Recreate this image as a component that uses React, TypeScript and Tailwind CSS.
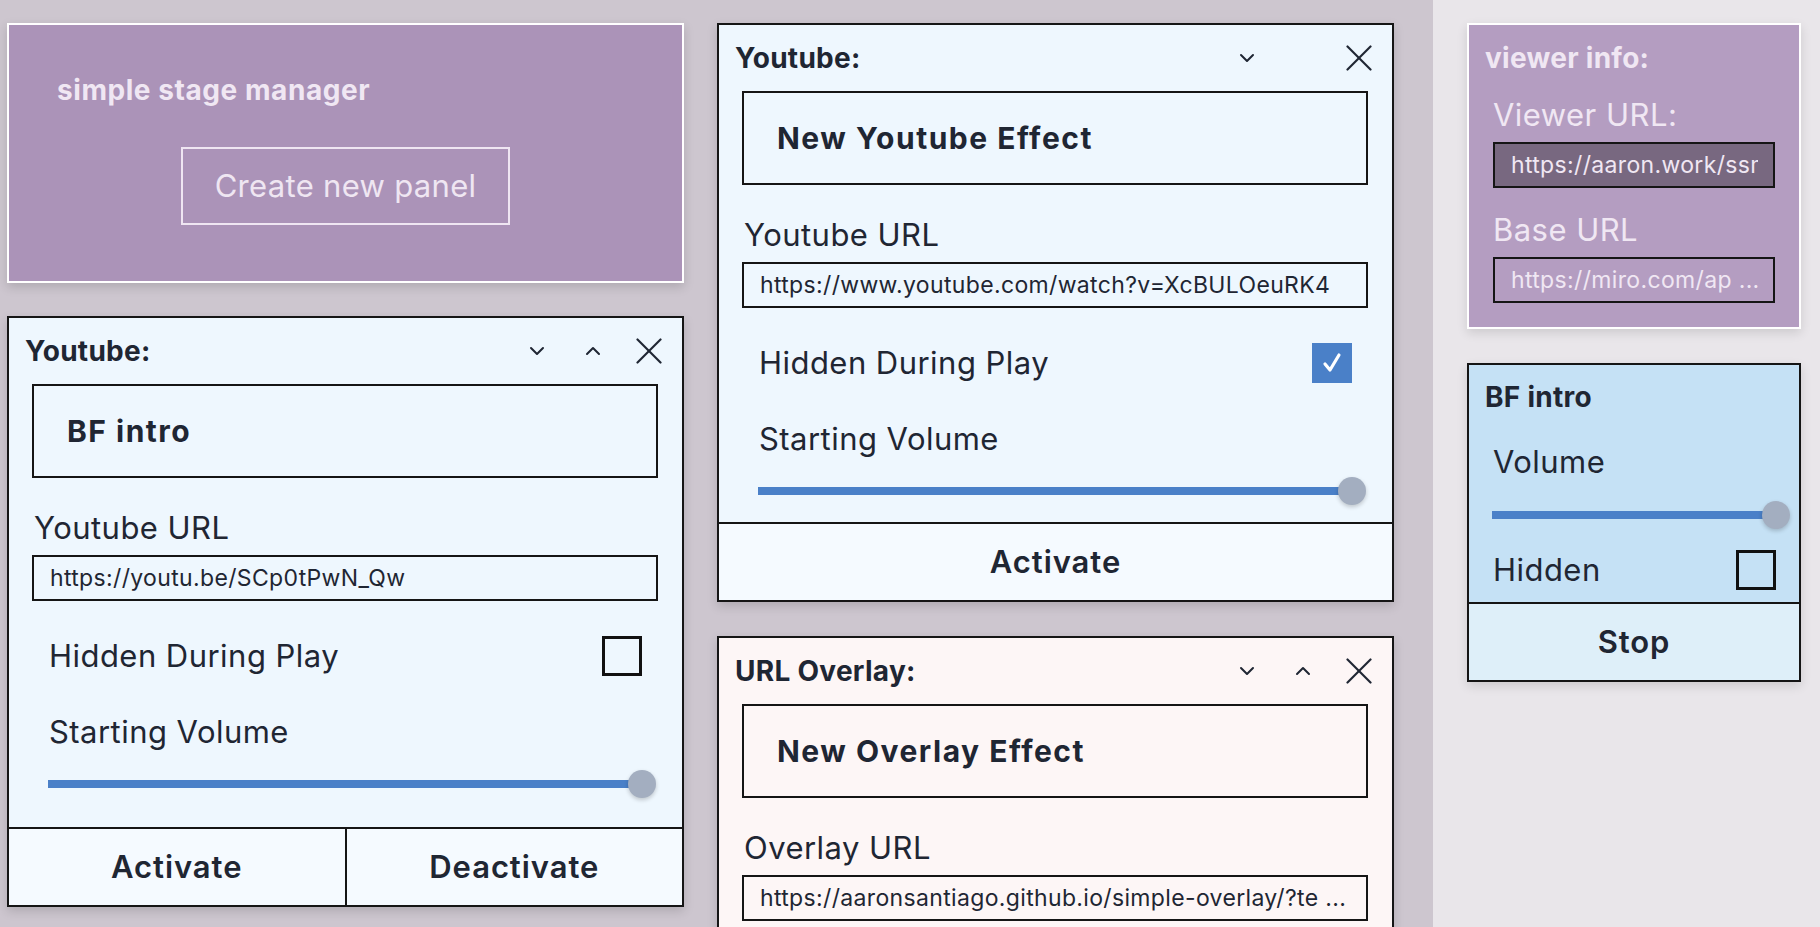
import React from 'react';

const ink = 'text-[#1f2633]';

function ChevronDown() {
  return (
    <svg width="16" height="10" viewBox="0 0 16 10" fill="none" stroke="#1f2633" strokeWidth="2" strokeLinecap="round" strokeLinejoin="round">
      <polyline points="2,2 8,8 14,2" />
    </svg>
  );
}

function ChevronUp() {
  return (
    <svg width="16" height="10" viewBox="0 0 16 10" fill="none" stroke="#1f2633" strokeWidth="2" strokeLinecap="round" strokeLinejoin="round">
      <polyline points="2,8 8,2 14,8" />
    </svg>
  );
}

function CloseX() {
  return (
    <svg width="26" height="26" viewBox="0 0 26 26" fill="none" stroke="#1f2633" strokeWidth="2.2" strokeLinecap="round">
      <line x1="1.5" y1="1.5" x2="24.5" y2="24.5" />
      <line x1="24.5" y1="1.5" x2="1.5" y2="24.5" />
    </svg>
  );
}

function Checkbox({ checked }: { checked?: boolean }) {
  if (checked) {
    return (
      <div className="w-[40px] h-[40px] bg-[#4a80c8] flex items-center justify-center">
        <svg width="22" height="22" viewBox="0 0 22 22" fill="none" stroke="#ffffff" strokeWidth="3.2" strokeLinecap="round" strokeLinejoin="round">
          <polyline points="4,12 9,18 18,3" />
        </svg>
      </div>
    );
  }
  return <div className="w-[40px] h-[40px] border-[3px] border-[#111111]" />;
}

function Slider({ className }: { className: string }) {
  return (
    <div className={'flex items-center h-[28px] ' + className}>
      <div className="flex-1 h-[8px] bg-[#4a80c8]" />
      <div className="w-[28px] h-[28px] -ml-[14px] rounded-full bg-[#a3aec0] shadow-[0_2px_4px_rgba(0,0,0,0.2)] shrink-0" />
    </div>
  );
}

function PanelHeader({ title, up }: { title: string; up?: boolean }) {
  return (
    <div className="flex items-center h-[66px] pl-[16px] pr-[5px]">
      <div className={'flex-1 text-[28px] tracking-[0.01em] font-bold ' + ink}>{title}</div>
      <div className="w-[56px] flex justify-center"><ChevronDown /></div>
      <div className="w-[56px] flex justify-center">{up ? <ChevronUp /> : null}</div>
      <div className="w-[56px] flex justify-center"><CloseX /></div>
    </div>
  );
}

function EffectBody({ name, label, url }: { name: string; label: string; url: string }) {
  return (
    <>
      <div className="ml-[23px] mr-[24px] h-[94px] border-2 border-[#151515] flex items-center pl-[33px]">
        <span className={'text-[30px] tracking-[0.05em] font-bold ' + ink}>{name}</span>
      </div>
      <div className={'ml-[25px] mt-[32px] text-[31px] tracking-[0.015em] leading-[36px] ' + ink}>{label}</div>
      <div className="ml-[23px] mr-[24px] mt-[9px] h-[46px] border-2 border-[#151515] flex items-center pl-[16px] pr-[14px] overflow-hidden">
        <span className={'text-[23px] tracking-[0.015em] whitespace-nowrap ' + ink}>{url}</span>
      </div>
    </>
  );
}

function YoutubePanel({ name, url, checked, up, dual }: { name: string; url: string; checked?: boolean; up?: boolean; dual?: boolean }) {
  return (
    <div className="w-[677px] border-2 border-[#151515] bg-[#eef7fe] shadow-[0_4px_10px_rgba(0,0,0,0.15)]">
      <PanelHeader title="Youtube:" up={up} />
      <EffectBody name={name} label="Youtube URL" url={url} />
      <div className="mt-[35px] h-[40px] mx-[40px] flex items-center justify-between">
        <span className={'text-[31px] tracking-[0.015em] ' + ink}>Hidden During Play</span>
        <Checkbox checked={checked} />
      </div>
      <div className={'ml-[40px] mt-[38px] text-[31px] tracking-[0.015em] leading-[36px] ' + ink}>Starting Volume</div>
      <Slider className="ml-[39px] w-[608px] mt-[20px]" />
      {dual ? (
        <div className="mt-[29px] h-[78px] border-t-2 border-[#151515] bg-[#f5faff] flex">
          <div className={'flex-1 flex items-center justify-center border-r-2 border-[#151515] text-[31px] tracking-[0.03em] font-semibold ' + ink}>Activate</div>
          <div className={'flex-1 flex items-center justify-center text-[31px] tracking-[0.03em] font-semibold ' + ink}>Deactivate</div>
        </div>
      ) : (
        <div className={'mt-[17px] h-[78px] border-t-2 border-[#151515] bg-[#f5faff] flex items-center justify-center text-[31px] tracking-[0.03em] font-semibold ' + ink}>
          Activate
        </div>
      )}
    </div>
  );
}

function OverlayPanel() {
  return (
    <div className="w-[677px] border-2 border-[#151515] bg-[#fdf6f6] shadow-[0_4px_10px_rgba(0,0,0,0.15)] shrink-0">
      <PanelHeader title="URL Overlay:" up />
      <EffectBody
        name="New Overlay Effect"
        label="Overlay URL"
        url="https://aaronsantiago.github.io/simple-overlay/?te ..."
      />
      <div className="h-[160px]" />
    </div>
  );
}

export default function App() {
  return (
    <div className="w-[1820px] h-[927px] overflow-hidden flex font-['Inter',sans-serif]">
      <div className="flex-1 bg-[#cdc6cf] flex items-start gap-[33px] pl-[7px] pt-[23px]">
        <div className="flex flex-col gap-[33px]">
          <div className="w-[677px] h-[260px] border-2 border-white bg-[#ab93b8] shadow-[0_4px_10px_rgba(0,0,0,0.15)] pt-[47px]">
            <div className="pl-[48px] text-[28px] tracking-[0.02em] leading-[36px] font-bold text-[#f0e7f3]">simple stage manager</div>
            <div className="mt-[39px] flex justify-center">
              <div className="w-[329px] h-[78px] border-2 border-[#efe6f2] flex items-center justify-center text-[31px] tracking-[0.01em] text-[#efe6f2]">
                Create new panel
              </div>
            </div>
          </div>
          <YoutubePanel name="BF intro" url="https://youtu.be/SCp0tPwN_Qw" up dual />
        </div>
        <div className="flex flex-col gap-[34px]">
          <YoutubePanel name="New Youtube Effect" url="https://www.youtube.com/watch?v=XcBULOeuRK4" checked />
          <OverlayPanel />
        </div>
      </div>
      <div className="w-[387px] bg-[#e9e6ea] pl-[34px] pt-[23px] flex flex-col gap-[34px]">
        <div className="w-[334px] h-[306px] border-2 border-white bg-[#b49dc1] shadow-[0_4px_10px_rgba(0,0,0,0.12)]">
          <div className="h-[66px] flex items-center pl-[16px] text-[28px] tracking-[0.01em] font-bold text-[#f0e7f3]">viewer info:</div>
          <div className="ml-[24px] mt-[6px] text-[31px] tracking-[0.015em] leading-[36px] text-[#f0e7f3]">Viewer URL:</div>
          <div className="mx-[24px] mt-[9px] h-[46px] border-2 border-[#151515] bg-[#786880] flex items-center pl-[16px] pr-[15px]">
            <div className="flex-1 overflow-hidden whitespace-nowrap text-[23px] tracking-[0.015em] text-[#f0e7f3]">https://aaron.work/ssm</div>
          </div>
          <div className="ml-[24px] mt-[24px] text-[31px] tracking-[0.015em] leading-[36px] text-[#f0e7f3]">Base URL</div>
          <div className="mx-[24px] mt-[9px] h-[46px] border-2 border-[#151515] flex items-center pl-[16px] pr-[14px]">
            <span className="text-[23px] tracking-[0.015em] whitespace-nowrap text-[#f0e7f3]">https://miro.com/ap ...</span>
          </div>
        </div>
        <div className="w-[334px] border-2 border-[#151515] bg-[#c5e1f5] shadow-[0_4px_10px_rgba(0,0,0,0.12)]">
          <div className={'h-[64px] flex items-center pl-[16px] text-[28px] tracking-[0.01em] font-bold ' + ink}>BF intro</div>
          <div className={'ml-[24px] mt-[15px] text-[31px] tracking-[0.015em] leading-[36px] ' + ink}>Volume</div>
          <Slider className="ml-[23px] w-[298px] mt-[21px]" />
          <div className="mt-[21px] h-[40px] pl-[24px] pr-[23px] flex items-center justify-between">
            <span className={'text-[31px] tracking-[0.015em] ' + ink}>Hidden</span>
            <Checkbox />
          </div>
          <div className={'mt-[12px] h-[78px] border-t-2 border-[#151515] bg-[#deeff9] flex items-center justify-center text-[31px] tracking-[0.03em] font-semibold ' + ink}>
            Stop
          </div>
        </div>
      </div>
    </div>
  );
}
